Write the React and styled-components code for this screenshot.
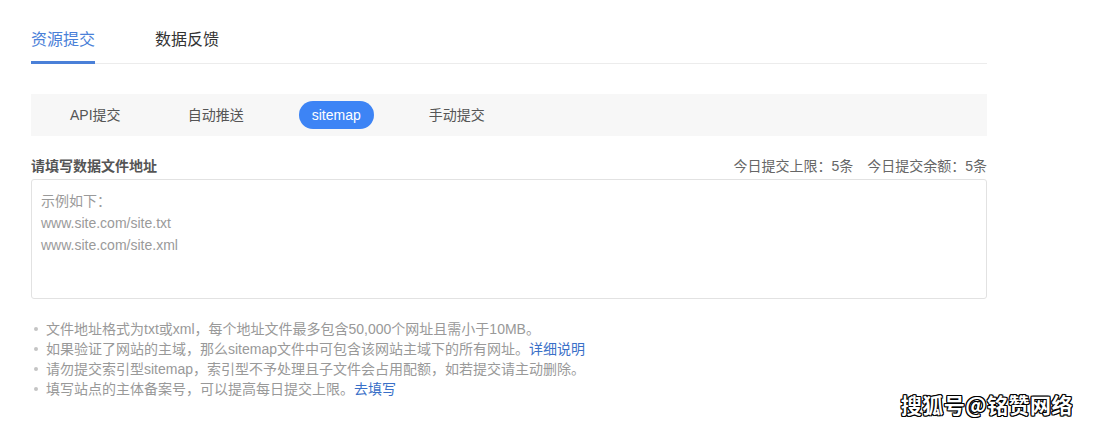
import React from 'react';
import styled, { createGlobalStyle } from 'styled-components';

const GlobalStyle = createGlobalStyle`
  html, body {
    margin: 0;
    padding: 0;
    background: #fff;
  }
  body {
    font-family: "Liberation Sans", "Noto Sans CJK SC", sans-serif;
    color: #333;
  }
`;

const Page = styled.div`
  position: relative;
  width: 1097px;
  height: 426px;
  overflow: hidden;
  padding-left: 31px;
  box-sizing: border-box;
`;

const Main = styled.div`
  width: 956px;
`;

const TopTabs = styled.div`
  display: flex;
  gap: 60px;
  border-bottom: 1px solid #ececec;
`;

const TopTab = styled.div`
  font-size: 16px;
  line-height: 22px;
  padding: 29px 0 10px;
  margin-bottom: -1px;
  color: ${p => (p.active ? '#4a80d8' : '#333')};
  border-bottom: 3px solid ${p => (p.active ? '#4a80d8' : 'transparent')};
`;

const SubBar = styled.div`
  display: flex;
  align-items: center;
  height: 42px;
  margin-top: 30px;
  padding-left: 4px;
  background: #f7f7f7;
`;

const SubItem = styled.div`
  flex: 0 0 120.5px;
  display: flex;
  justify-content: center;
`;

const SubLabel = styled.span`
  font-size: 14px;
  line-height: 28px;
  height: 28px;
  padding: 0 13px;
  border-radius: 14px;
  color: ${p => (p.active ? '#fff' : '#555')};
  background: ${p => (p.active ? '#3d84f5' : 'transparent')};
`;

const FieldHead = styled.div`
  display: flex;
  justify-content: space-between;
  align-items: center;
  margin-top: 19px;
  height: 20px;
  font-size: 14px;
`;

const FieldTitle = styled.span`
  font-weight: bold;
  color: #555;
`;

const Quota = styled.span`
  color: #666;
  & + & {
    margin-left: 14px;
  }
`;

const Input = styled.textarea`
  display: block;
  width: 100%;
  height: 120px;
  margin-top: 4px;
  box-sizing: border-box;
  padding: 10px 9px;
  border: 1px solid #e2e2e2;
  border-radius: 3px;
  resize: none;
  font-family: "Liberation Sans", "Noto Sans CJK SC", sans-serif;
  font-size: 14px;
  line-height: 22px;
  color: #333;
  outline: none;
  &::placeholder {
    color: #9a9a9a;
  }
`;

const Notes = styled.ul`
  list-style: none;
  margin: 20px 0 0;
  padding: 0;
`;

const Note = styled.li`
  position: relative;
  padding-left: 15px;
  font-size: 14px;
  line-height: 20px;
  color: #999;
  &::before {
    content: '';
    position: absolute;
    left: 3px;
    top: 8px;
    width: 4px;
    height: 4px;
    border-radius: 50%;
    background: #c4c4c4;
  }
`;

const Link = styled.a`
  color: #3a70c8;
  text-decoration: none;
  cursor: pointer;
`;

const Watermark = styled.div`
  position: absolute;
  right: 24px;
  top: 391px;
  font-family: "Noto Sans CJK SC", sans-serif;
  font-size: 21px;
  font-weight: bold;
  line-height: 26px;
  color: #fff;
  letter-spacing: 0.5px;
  text-shadow:
    -1px -1px 0 #000, 1px -1px 0 #000, -1px 1px 0 #000, 1px 1px 0 #000,
    0 1px 0 #000, 1px 0 0 #000, 0 -1px 0 #000, -1px 0 0 #000;
`;

const subTabs = ['API提交', '自动推送', 'sitemap', '手动提交'];

export default function App() {
  return (
    <>
      <GlobalStyle />
      <Page>
        <Main>
          <TopTabs>
            <TopTab active>资源提交</TopTab>
            <TopTab>数据反馈</TopTab>
          </TopTabs>

          <SubBar>
            {subTabs.map(t => (
              <SubItem key={t}>
                <SubLabel active={t === 'sitemap'}>{t}</SubLabel>
              </SubItem>
            ))}
          </SubBar>

          <FieldHead>
            <FieldTitle>请填写数据文件地址</FieldTitle>
            <span>
              <Quota>今日提交上限：5条</Quota>
              <Quota>今日提交余额：5条</Quota>
            </span>
          </FieldHead>

          <Input placeholder={'示例如下：\nwww.site.com/site.txt\nwww.site.com/site.xml'} />

          <Notes>
            <Note>文件地址格式为txt或xml，每个地址文件最多包含50,000个网址且需小于10MB。</Note>
            <Note>
              如果验证了网站的主域，那么sitemap文件中可包含该网站主域下的所有网址。<Link>详细说明</Link>
            </Note>
            <Note>请勿提交索引型sitemap，索引型不予处理且子文件会占用配额，如若提交请主动删除。</Note>
            <Note>
              填写站点的主体备案号，可以提高每日提交上限。<Link>去填写</Link>
            </Note>
          </Notes>
        </Main>
        <Watermark>搜狐号@铭赞网络</Watermark>
      </Page>
    </>
  );
}
